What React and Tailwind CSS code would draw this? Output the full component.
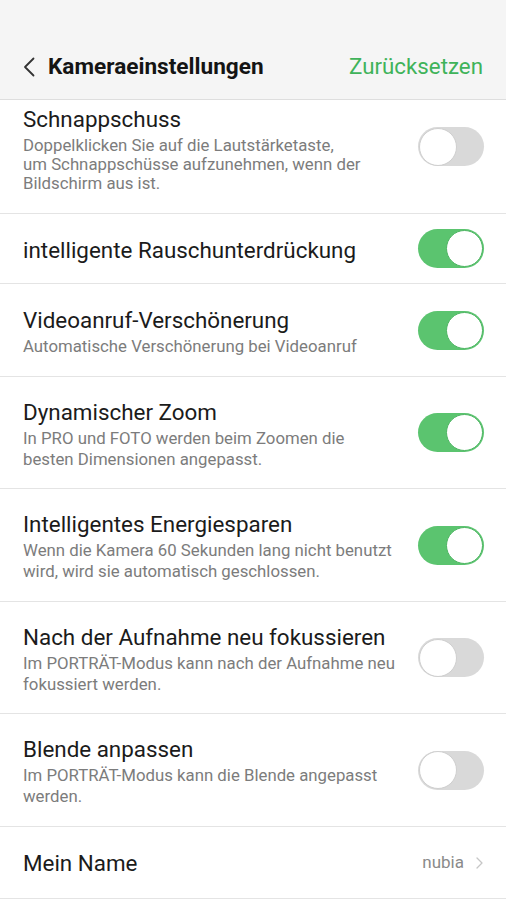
import React from "react";

function Toggle({ on, className = "" }) {
  return on ? (
    <div className={`w-[66px] h-[39px] rounded-full bg-[#5bc46f] flex items-center justify-end p-[1px] shrink-0 ${className}`}>
      <div className="w-[37px] h-[37px] rounded-full bg-white border border-[#4db562]" />
    </div>
  ) : (
    <div className={`w-[66px] h-[39px] rounded-full bg-[#d9d9d9] flex items-center justify-start p-[0.5px] shrink-0 ${className}`}>
      <div className="w-[38px] h-[38px] rounded-full bg-white border border-[#cfcfcf]" />
    </div>
  );
}

function Row({ title, desc, on, h }) {
  return (
    <div className={`flex items-center justify-between pl-[23px] pr-[22px] border-b border-[#e4e4e4] ${h}`}>
      <div className="flex flex-col pr-2 pt-[3px] whitespace-nowrap">
        <div className="text-[22.4px] leading-[26px] text-[#1b1b1b]">{title}</div>
        {desc && (
          <div className="text-[16.8px] leading-[21px] mt-[3px] text-[#7c7c7c]">
            {desc.map((l, i) => (
              <div key={i}>{l}</div>
            ))}
          </div>
        )}
      </div>
      <Toggle on={on} />
    </div>
  );
}

export default function App() {
  return (
    <div className="w-[506px] h-[900px] bg-white overflow-hidden" style={{ fontFamily: "Roboto, 'Noto Sans', sans-serif" }}>
      <div className="h-[100px] bg-[#f5f5f5] border-b border-[#dedede] pt-[40px]">
        <div className="h-[54px] flex items-center justify-between pl-[23px] pr-[23px]">
          <div className="flex items-center">
            <svg width="12" height="20" viewBox="0 0 12 20" className="mr-[13px]">
              <path d="M10.5 1.5 L2 10 L10.5 18.5" fill="none" stroke="#333" strokeWidth="1.8" strokeLinecap="round" strokeLinejoin="round" />
            </svg>
            <span className="text-[22.6px] font-bold text-[#141414]">Kameraeinstellungen</span>
          </div>
          <span className="text-[22.3px] text-[#3fb35a]">Zurücksetzen</span>
        </div>
      </div>

      {/* Schnappschuss (partially scrolled) */}
      <div className="h-[114px] flex items-start justify-between pl-[23px] pr-[22px] border-b border-[#e4e4e4]">
        <div className="flex flex-col pt-[6px] whitespace-nowrap">
          <div className="text-[22.4px] leading-[26px] text-[#1b1b1b]">Schnappschuss</div>
          <div className="text-[16.8px] leading-[19px] mt-[4px] text-[#7c7c7c]">
            <div>Doppelklicken Sie auf die Lautstärketaste,</div>
            <div>um Schnappschüsse aufzunehmen, wenn der</div>
            <div>Bildschirm aus ist.</div>
          </div>
        </div>
        <Toggle on={false} className="mt-[27px]" />
      </div>

      <Row h="h-[70px]" title="intelligente Rauschunterdrückung" on />
      <Row h="h-[93px]" title="Videoanruf-Verschönerung" desc={["Automatische Verschönerung bei Videoanruf"]} on />
      <Row h="h-[112px]" title="Dynamischer Zoom" desc={["In PRO und FOTO werden beim Zoomen die", "besten Dimensionen angepasst."]} on />
      <Row h="h-[113px]" title="Intelligentes Energiesparen" desc={["Wenn die Kamera 60 Sekunden lang nicht benutzt", "wird, wird sie automatisch geschlossen."]} on />
      <Row h="h-[112px]" title="Nach der Aufnahme neu fokussieren" desc={["Im PORTRÄT-Modus kann nach der Aufnahme neu", "fokussiert werden."]} on={false} />
      <Row h="h-[113px]" title="Blende anpassen" desc={["Im PORTRÄT-Modus kann die Blende angepasst", "werden."]} on={false} />

      <div className="h-[72px] flex items-center justify-between pl-[23px] pr-[23px] border-b border-[#e4e4e4]">
        <span className="text-[22.4px] text-[#1b1b1b] pt-[2px]">Mein Name</span>
        <div className="flex items-center">
          <span className="text-[17px] text-[#8a8a8a] mr-[12px]">nubia</span>
          <svg width="7" height="12" viewBox="0 0 7 12">
            <path d="M1 1 L6 6 L1 11" fill="none" stroke="#c6c6c6" strokeWidth="1.3" strokeLinecap="round" strokeLinejoin="round" />
          </svg>
        </div>
      </div>
    </div>
  );
}
